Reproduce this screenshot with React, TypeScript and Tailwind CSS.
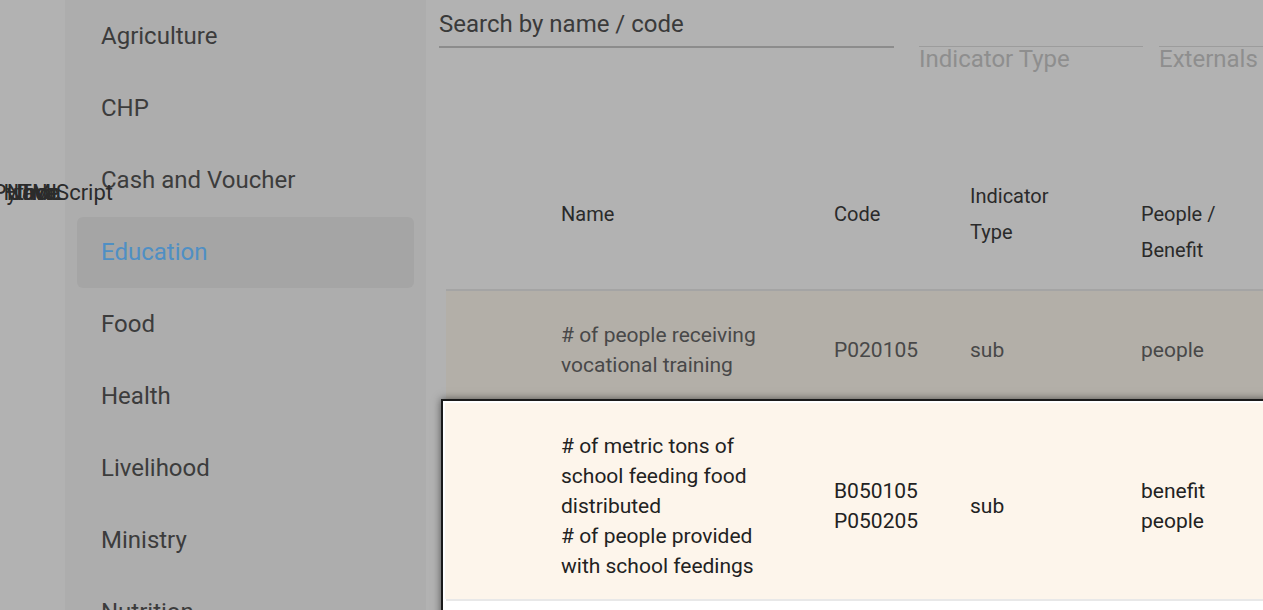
import React from "react";

const sectors = [
  "Agriculture",
  "CHP",
  "Cash and Voucher",
  "Education",
  "Food",
  "Health",
  "Livelihood",
  "Ministry",
  "Nutrition",
];

export default function App() {
  return (
    <div
      className="relative flex h-[610px] w-full overflow-hidden bg-[#b2b2b2]"
      style={{ fontFamily: "Roboto, 'Noto Sans', sans-serif" }}
    >
      {/* left strip */}
      <div className="relative w-[65px] shrink-0 bg-[#b2b2b2]">
        <div className="absolute left-0 top-[177px] w-[113px] text-[22px] leading-[32px] text-[#2b2b2b]">
          <span className="absolute right-0 top-0 whitespace-nowrap">JavaScript</span>
          <span className="absolute right-[52px] top-0 whitespace-nowrap">Python</span>
          <span className="absolute right-[50px] top-0 whitespace-nowrap">HTML</span>
          <span className="absolute right-[54px] top-0 whitespace-nowrap">Node</span>
          <span className="absolute right-[56px] top-0 whitespace-nowrap">Java</span>
        </div>
      </div>

      {/* sidebar */}
      <div className="flex w-[361px] shrink-0 flex-col bg-[#adadad]">
        {sectors.map((s) =>
          s === "Education" ? (
            <div key={s} className="flex h-[72px] shrink-0 items-center px-[12px]">
              <div className="flex h-[71px] w-full items-center rounded-[6px] bg-[#a5a5a5] pl-[24px] text-[24px] text-[#4f8fc4]">
                {s}
              </div>
            </div>
          ) : (
            <div
              key={s}
              className="flex h-[72px] shrink-0 items-center pl-[36px] text-[24px] text-[#3c3c3c]"
            >
              {s}
            </div>
          )
        )}
      </div>

      {/* main */}
      <div className="flex min-w-0 flex-1 flex-col">
        {/* filters */}
        <div className="flex h-[151px] shrink-0 items-start pl-[13px]">
          <div className="w-[455px] shrink-0 border-b-2 border-[#8c8c8c] pb-[6px] pt-[8px] text-[24px] leading-[32px] text-[#3a3a3a]">
            Search by name / code
          </div>
          <div className="ml-[25px] mt-[46px] w-[224px] shrink-0 border-t border-[#9c9c9c] text-[24px] leading-[24px] text-[#8e8e8e]">
            Indicator Type
          </div>
          <div className="ml-[16px] mt-[46px] flex-1 border-t border-[#9c9c9c] text-[24px] leading-[24px] text-[#8e8e8e]">
            Externals
          </div>
        </div>

        {/* table */}
        <div className="ml-[20px] flex flex-col">
          {/* header */}
          <div className="grid h-[140px] grid-cols-[115px_273px_136px_171px_1fr] border-b-2 border-[#a4a4a4] text-[20px] font-normal leading-[36px] text-[#2a2a2a]">
            <div />
            <div className="pt-[45px]">Name</div>
            <div className="pt-[45px]">Code</div>
            <div className="pt-[27px]">
              Indicator
              <br />
              Type
            </div>
            <div className="pt-[45px]">
              People /
              <br />
              Benefit
            </div>
          </div>

          {/* row 1 */}
          <div className="grid h-[108px] grid-cols-[115px_273px_136px_171px_1fr] items-center bg-[#b3afa8] pt-[10px] text-[21px] leading-[30px] text-[#484848]">
            <div />
            <div>
              # of people receiving
              <br />
              vocational training
            </div>
            <div>P020105</div>
            <div>sub</div>
            <div>people</div>
          </div>

          {/* highlighted row */}
          <div className="relative z-10 -ml-[5px] -mr-[40px] border-2 border-[#1a1a1a] bg-white p-[2px] shadow-[0_0_8px_rgba(0,0,0,0.55)]">
            <div className="grid h-[196px] grid-cols-[116px_273px_136px_171px_1fr] items-center bg-[#fdf5eb] pt-[10px] text-[21px] leading-[30px] text-[#222222]">
              <div />
              <div>
                # of metric tons of
                <br />
                school feeding food
                <br />
                distributed
                <br />
                # of people provided
                <br />
                with school feedings
              </div>
              <div>
                B050105
                <br />
                P050205
              </div>
              <div>sub</div>
              <div>
                benefit
                <br />
                people
              </div>
            </div>
            <div className="ml-[1px] h-[2px] bg-[#e8e8e8]" />
            <div className="h-[20px]" />
          </div>
        </div>
      </div>
    </div>
  );
}
